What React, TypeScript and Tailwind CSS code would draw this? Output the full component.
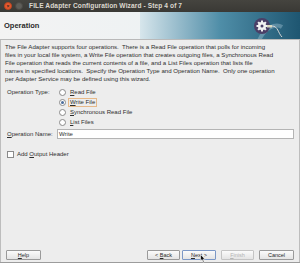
import React from "react";

const FONT = { fontFamily: '"Liberation Sans", Arial, sans-serif' };

function Radio({ checked, mnemonic, rest, focus }: { checked?: boolean; mnemonic: string; rest: string; focus?: boolean }) {
  return (
    <div className="flex items-center h-[10px] gap-[2px]">
      <span className="w-[7px] h-[7px] rounded-full border border-[#8a8a8a] bg-white flex items-center justify-center">
        {checked && <span className="w-[3px] h-[3px] rounded-full bg-[#4a6c9b]" />}
      </span>
      <span className={focus ? "px-[1px] border border-[#e6b98a] leading-[7px]" : "px-[1px] border border-transparent leading-[7px]"}>
        <span className="underline">{mnemonic}</span>
        {rest}
      </span>
    </div>
  );
}

function Btn({ m, pre, rest, primary, disabled }: { m: string; pre?: string; rest: string; primary?: boolean; disabled?: boolean }) {
  return (
    <div
      className={
        "h-[10px] flex items-center justify-center rounded-[1px] border bg-gradient-to-b from-[#fbfbfb] to-[#e4e4e4] text-[5.5px] whitespace-pre " +
        (primary ? "border-[#7c98c6] " : "border-[#9a9a9a] ") +
        (disabled ? "text-[#b4b4b4] border-[#c4c4c4]" : "text-[#2a2a2a]")
      }
    >
      <span>
        {pre}
        <span className="underline">{m}</span>
        {rest}
      </span>
    </div>
  );
}

export default function App() {
  return (
    <div className="w-[300px] h-[263px] overflow-hidden flex flex-col bg-[#ededed] text-[#2e2e2e]" style={FONT}>
      {/* Title bar */}
      <div className="h-[12px] flex items-center bg-gradient-to-b from-[#45443f] to-[#3a3935] shrink-0">
        <span className="ml-[4px] w-[8px] h-[8px] rounded-full bg-[#e9592f] border border-[#b54621] flex items-center justify-center text-[5px] leading-none text-[#3a2a22] font-bold">×</span>
        <span className="ml-[3px] w-[8px] h-[8px] rounded-full bg-[#5f5e59] border border-[#4a4945]" />
        <span className="ml-[6px] text-[6.6px] font-bold text-[#dcd8cf] tracking-[0.1px]">FILE Adapter Configuration Wizard - Step 4 of 7</span>
      </div>

      {/* Header */}
      <div className="h-[28px] shrink-0 flex items-center border-b border-[#b9b9b9] bg-gradient-to-r from-[#f3f3f3] via-[#eef2f3] to-[#2d6b85]">
        <div className="flex-1 h-full flex items-center pl-[4px]">
          <span className="text-[7.5px] font-bold text-[#2a2a2a]">Operation</span>
        </div>
        <div className="w-[160px] h-full flex items-center justify-end pr-[12px] bg-gradient-to-r from-[#d7e6ec] via-[#4f8ea8] to-[#1e5671]">
          <svg width="40" height="26" viewBox="0 0 40 26">
            <path d="M10 30 C 16 14, 28 10, 34 14" stroke="#b9d8e4" strokeOpacity="0.35" strokeWidth="4" fill="none" />
            <circle cx="14" cy="13" r="8" fill="#4a3f67" />
            <g fill="#f2f2f2">
              <circle cx="14" cy="13" r="4" />
              {[0, 45, 90, 135, 180, 225, 270, 315].map(a => (
                <rect key={a} x="13" y="7.5" width="2" height="3" transform={`rotate(${a} 14 13)`} />
              ))}
            </g>
            <circle cx="14" cy="13" r="1.5" fill="#4a3f67" />
            <rect x="19" y="12" width="5" height="2.5" fill="#d9d9c0" />
            <path d="M24 13 C 30 13, 30 20, 34 24" stroke="#d6d6d6" strokeWidth="1" fill="none" />
          </svg>
        </div>
      </div>

      {/* Body */}
      <div className="flex-1 flex flex-col border-l border-r border-[#bdbdbd] px-[4px]">
        <p className="mt-[3px] text-[6.1px] leading-[8px] text-[#2e2e2e] whitespace-pre">
          {"The File Adapter supports four operations.  There is a Read File operation that polls for incoming\nfiles in your local file system, a Write File operation that creates outgoing files, a Synchronous Read\nFile operation that reads the current contents of a file, and a List Files operation that lists file\nnames in specified locations.  Specify the Operation Type and Operation Name.  Only one operation\nper Adapter Service may be defined using this wizard."}
        </p>

        <div className="mt-[4px] flex text-[6px]">
          <div className="w-[54px] pl-[2px] h-[10px] flex items-center">Operation Type:</div>
          <div className="flex flex-col">
            <Radio mnemonic="R" rest="ead File" />
            <Radio checked focus mnemonic="W" rest="rite File" />
            <Radio mnemonic="S" rest="ynchronous Read File" />
            <Radio mnemonic="L" rest="ist Files" />
          </div>
        </div>

        <div className="mt-[2px] flex items-center text-[6px]">
          <div className="w-[52px] pl-[2px]">
            <span className="underline">O</span>peration Name:
          </div>
          <div className="flex-1 mr-[1px] h-[10px] border border-[#b4b4b4] bg-white flex items-center pl-[1px]">Write</div>
        </div>

        <div className="mt-[11px] flex items-center gap-[3px] text-[6px] pl-[2px]">
          <span className="w-[7px] h-[7px] border border-[#8a8a8a] bg-white" />
          <span>
            Add <span className="underline">O</span>utput Header
          </span>
        </div>

        <div className="flex-1" />

        {/* Buttons */}
        <div className="flex items-center mb-[2px]">
          <div className="w-[35px] ml-[1px]">
            <Btn m="H" rest="elp" />
          </div>
          <div className="flex-1" />
          <div className="w-[33px]">
            <Btn pre={"<\u00a0"} m="B" rest="ack" />
          </div>
          <div className="relative w-[34px] ml-[2px]">
            <Btn primary m="N" rest={"ext\u00a0>"} />
            <svg className="absolute left-[18px] top-[4px]" width="6" height="9" viewBox="0 0 6 9">
              <path d="M0.5 0.5 L0.5 7 L2 5.6 L3.2 8.3 L4.2 7.9 L3 5.2 L5 5.2 Z" fill="#111" stroke="#fff" strokeWidth="0.6" />
            </svg>
          </div>
          <div className="w-[33px] ml-[5px]">
            <Btn disabled m="F" rest="inish" />
          </div>
          <div className="w-[35px] ml-[5px] mr-[1px]">
            <Btn m="" rest="Cancel" />
          </div>
        </div>
      </div>
      <div className="h-[1px] bg-[#9c9c9c] shrink-0" />
    </div>
  );
}
